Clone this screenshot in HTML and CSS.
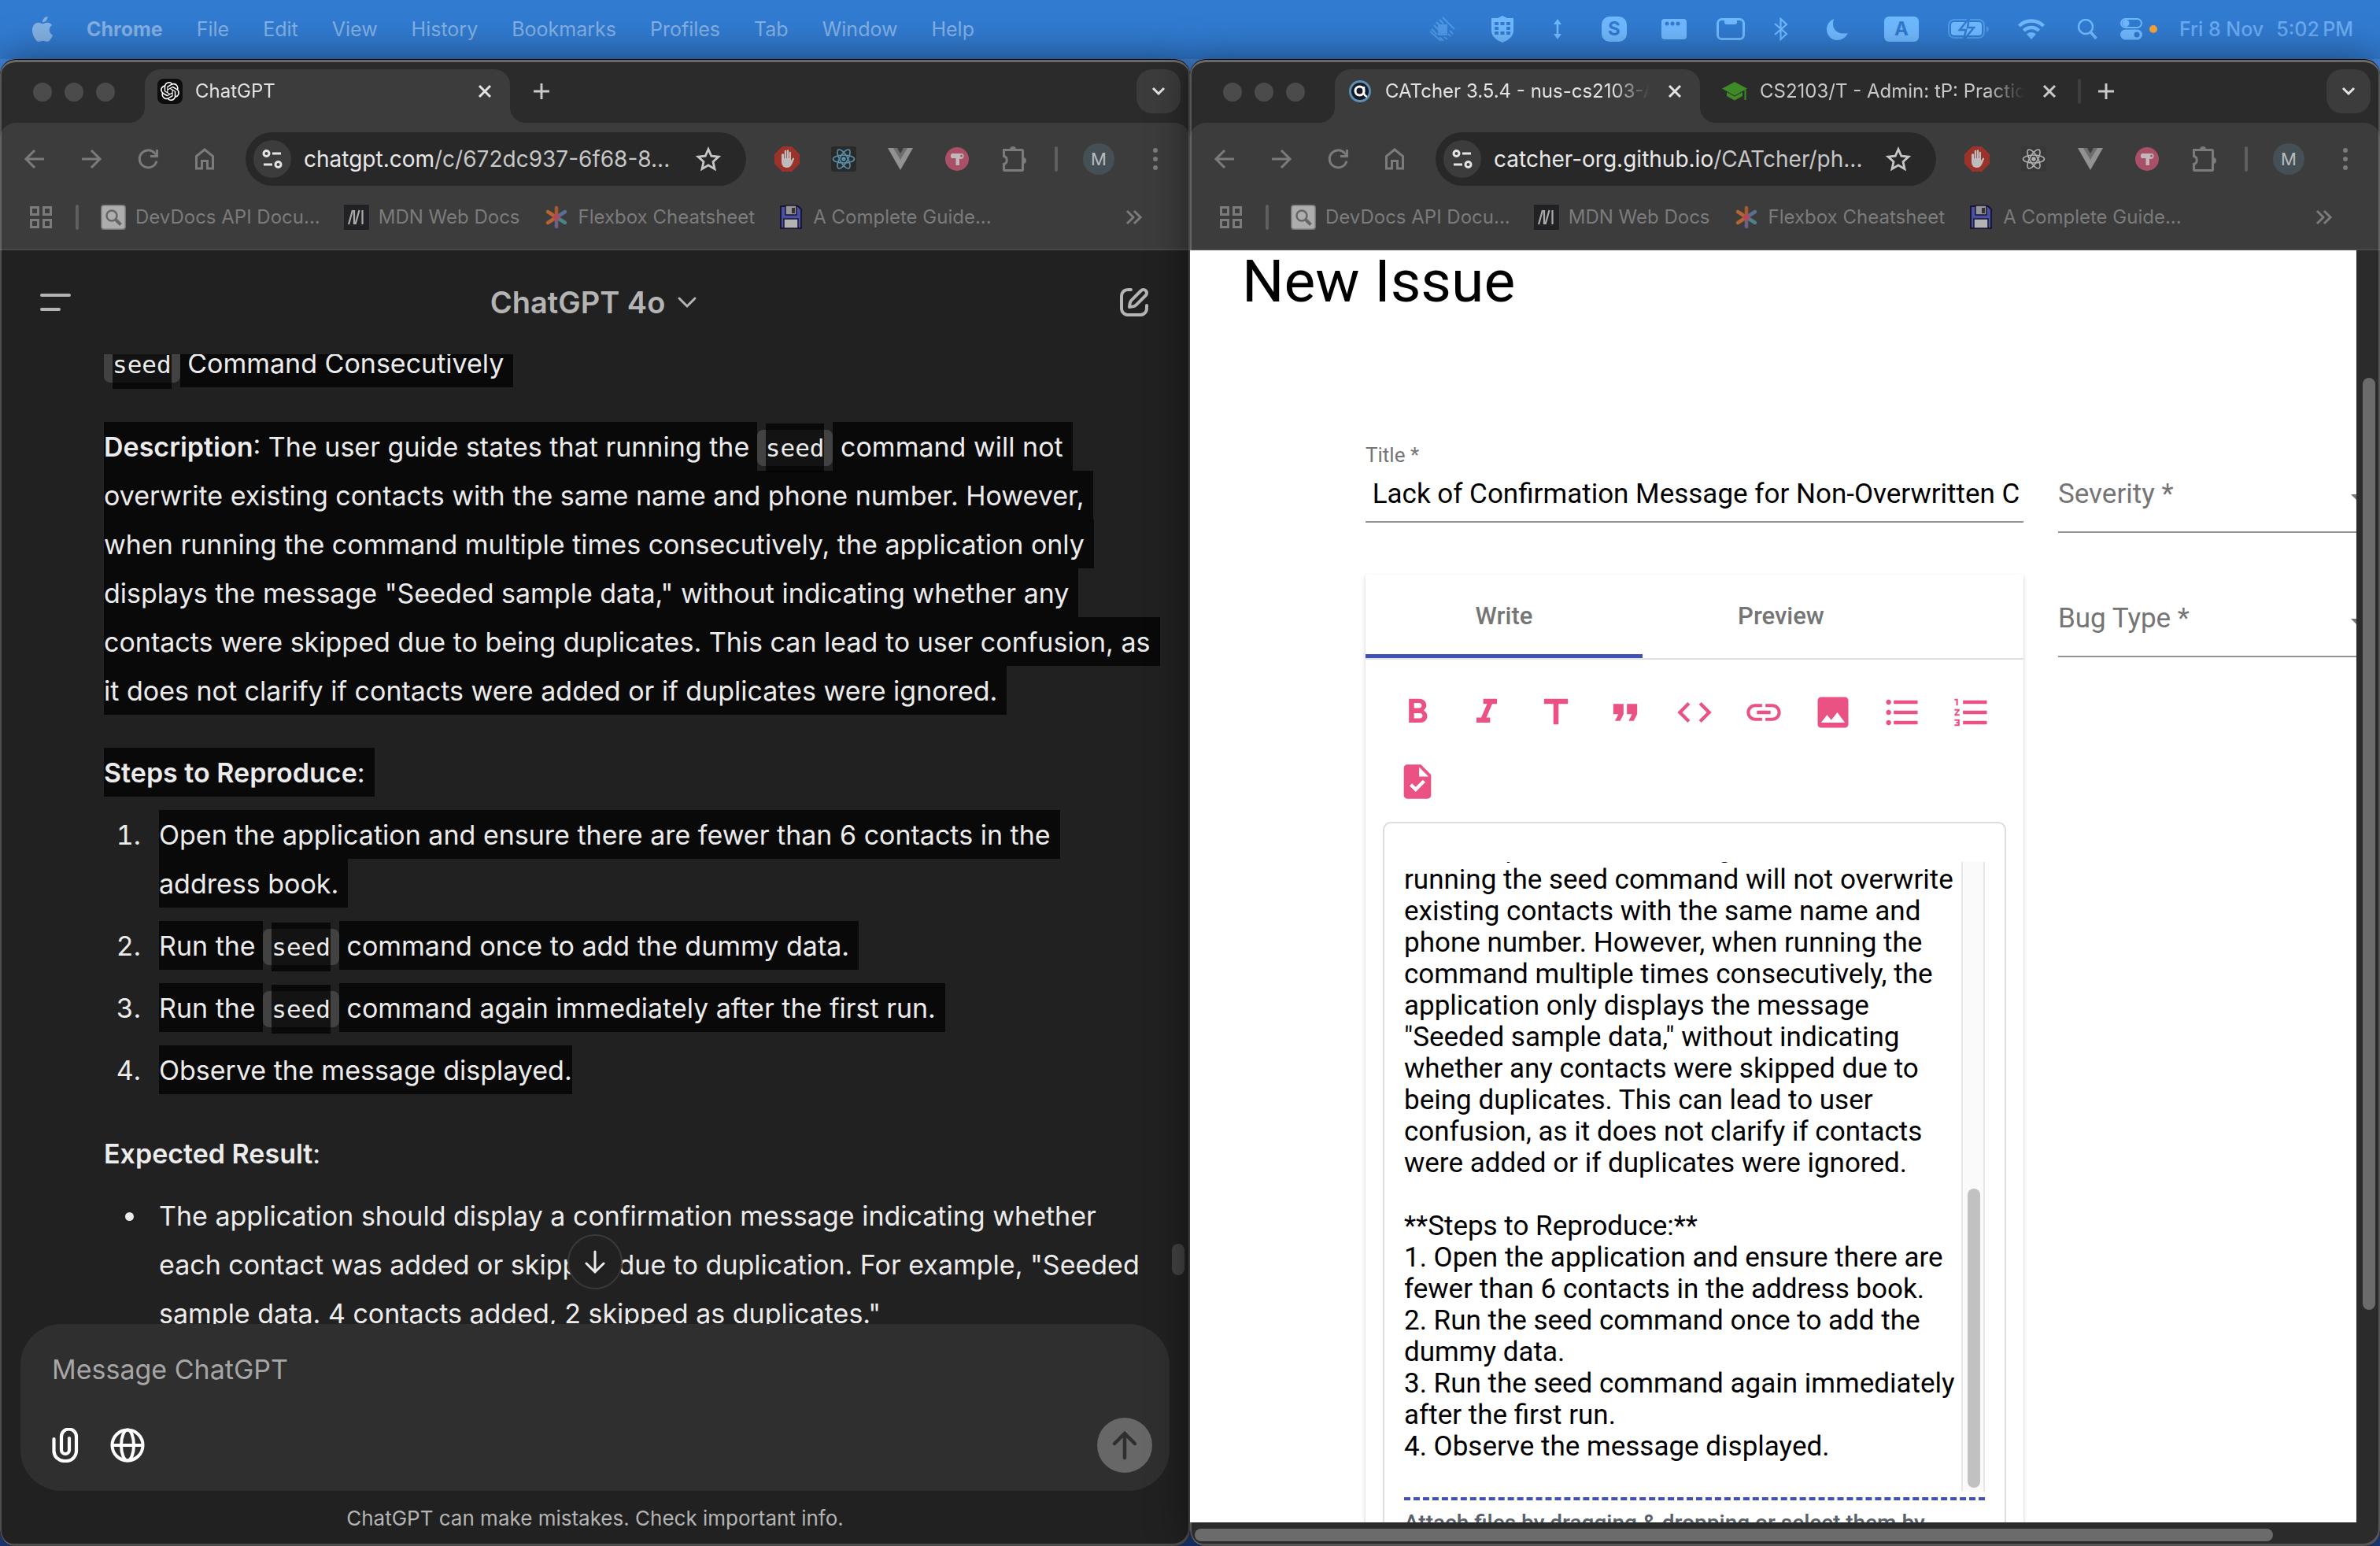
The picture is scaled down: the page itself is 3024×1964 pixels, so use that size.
FILE: index.html
```html
<!DOCTYPE html>
<html lang="en">
<head>
<meta charset="utf-8">
<title>Desktop</title>
<link rel="stylesheet" href="styles.css">
</head>
<body>
<svg class="sprite" aria-hidden="true">
  <symbol id="close" viewBox="0 0 32 32"><path d="M9 9l14 14M23 9L9 23" stroke="currentColor" stroke-width="3" fill="none"/></symbol>
  <symbol id="plus" viewBox="0 0 32 32"><path d="M16 6v20M6 16h20" stroke="currentColor" stroke-width="3" fill="none"/></symbol>
  <symbol id="chevron" viewBox="0 0 32 32"><path d="M9 12l7 7 7-7" stroke="currentColor" stroke-width="3" fill="none"/></symbol>
  <symbol id="back" viewBox="0 0 32 32"><path d="M28 16H5M16 5L5 16l11 11" stroke="currentColor" stroke-width="3" fill="none"/></symbol>
  <symbol id="forward" viewBox="0 0 32 32"><path d="M4 16h23M16 5l11 11-11 11" stroke="currentColor" stroke-width="3" fill="none"/></symbol>
  <symbol id="reload" viewBox="0 0 32 32"><path d="M27 18.500a11 11 0 1 1-3-10.500l3.500 3.500M27.500 4v8.500H19" stroke="currentColor" stroke-width="3" fill="none"/></symbol>
  <symbol id="home" viewBox="0 0 32 32"><path d="M5.500 28V12.500L16 4l10.500 8.500V28h-7v-9.500h-7V28z" stroke="currentColor" stroke-width="3" fill="none"/></symbol>
  <symbol id="tune" viewBox="0 0 32 32"><g stroke="currentColor" stroke-width="3" fill="none"><circle cx="8.500" cy="9" r="3.500"/><path d="M16 9h11M5 23h11"/><circle cx="23.500" cy="23" r="3.500"/></g></symbol>
  <symbol id="star" viewBox="0 0 32 32"><path d="M16 3.500l3.800 8.700 9.200.9-7 6.300 2 9.200-8-4.800-8 4.800 2-9.200-7-6.300 9.200-.9z" stroke="currentColor" stroke-width="2.800" fill="none"/></symbol>
  <symbol id="blocker" viewBox="0 0 32 32"><path d="M10 0h12l10 10v12L22 32H10L0 22V10z" fill="#9c332b"/><path d="M9 10.500v9c0 5 3 7.500 7 7.500 3 0 5-1.500 6.500-5l2.500-6c.5-1.500-1.500-2-2.300-.6L21 18.500V8c0-1.700-2.300-1.700-2.300 0v7h-.6V5.500c0-1.700-2.300-1.700-2.300 0V15h-.7V6c0-1.700-2.300-1.700-2.300 0v9.500h-.7v-5c0-1.700-3.100-1.700-3.100 0z" fill="#bdbdbd"/></symbol>
  <symbol id="react" viewBox="0 0 32 32"><g fill="none" stroke="currentColor" stroke-width="1.600"><ellipse cx="16" cy="16" rx="13.500" ry="5"/><ellipse cx="16" cy="16" rx="13.500" ry="5" transform="rotate(60 16 16)"/><ellipse cx="16" cy="16" rx="13.500" ry="5" transform="rotate(120 16 16)"/></g><circle cx="16" cy="16" r="2.700" fill="currentColor"/></symbol>
  <symbol id="vue" viewBox="0 0 32 32"><path d="M0 2h32L16 30z" fill="#929292"/><path d="M7 2h18l-9 15z" fill="#6e6e6e"/><path d="M12 2h8l-4 7z" fill="#3c3c3c"/></symbol>
  <symbol id="toggl" viewBox="0 0 32 32"><circle cx="16" cy="16" r="15" fill="#a94f66"/><path d="M9 9h14a4 4 0 0 1 0 6.500c-1.500.8-3 .4-4 0V24h-4.500v-9H9c-1.500-2-1.500-4 0-6z" fill="#c0b8ba"/><circle cx="21.500" cy="12" r="1.500" fill="#a94f66"/></symbol>
  <symbol id="puzzle" viewBox="0 0 32 32"><path d="M3.500 4.500h23a1 1 0 0 1 1 1v24a1 1 0 0 1-1 1h-22a1 1 0 0 1-1-1v-7c5-1 5-9 0-10v-7z" stroke="currentColor" stroke-width="3" fill="none"/><path d="M11 4a4 4 0 0 1 8 0zM28 14a4 4 0 0 1 0 8z" fill="currentColor"/></symbol>
  <symbol id="dots" viewBox="0 0 32 32"><g fill="currentColor"><circle cx="16" cy="5" r="3"/><circle cx="16" cy="16" r="3"/><circle cx="16" cy="27" r="3"/></g></symbol>
  <symbol id="apps" viewBox="0 0 32 32"><path d="M3.500 3.500h9v9h-9zM19.500 3.500h9v9h-9zM3.500 19.500h9v9h-9zM19.500 19.500h9v9h-9z" stroke="currentColor" stroke-width="3" fill="none"/></symbol>
  <symbol id="devdocs" viewBox="0 0 32 32"><rect width="32" height="32" rx="4" fill="#777"/><rect x="1.500" y="1.500" width="29" height="29" rx="3" fill="#adadad"/><circle cx="14" cy="14" r="6.500" fill="none" stroke="#666" stroke-width="2.500"/><path d="M19 19l6.500 6.500" stroke="#666" stroke-width="4"/></symbol>
  <symbol id="mdn" viewBox="0 0 32 32"><path d="M0 0h32v32H0z" fill="#222226"/><path d="M6 25l5-18M13 7v18M14.500 25l5-18M23.500 7v18" stroke="#ababab" stroke-width="2.200" fill="none"/></symbol>
  <symbol id="flexbox" viewBox="0 0 32 32"><g stroke-width="4.500" stroke-linecap="round"><path d="M16 4v12" stroke="#a9572f"/><path d="M16 16v12" stroke="#6c5f8a"/><path d="M5 9l11 7" stroke="#b5652f"/><path d="M5 23l11-7" stroke="#b5652f"/><path d="M27 9l-11 7" stroke="#5a6f96"/><path d="M27 23l-11-7" stroke="#4d8388"/></g><circle cx="16" cy="16" r="4" fill="#b0485a"/></symbol>
  <symbol id="floppy" viewBox="0 0 32 32"><path d="M3 2h22l4 4v24H3z" fill="#4c4fa8" stroke="#17172c" stroke-width="2"/><path d="M9 1h14v12H9z" fill="#969696" stroke="#17172c" stroke-width="1.500"/><path d="M17 4h4v7h-4z" fill="#333"/><path d="M7 18h18v12H7z" fill="#b3b3b3" stroke="#17172c" stroke-width="1.500"/></symbol>
  <symbol id="more" viewBox="0 0 32 32"><path d="M8 8l8 8-8 8M17 8l8 8-8 8" stroke="currentColor" stroke-width="3" fill="none"/></symbol>
</svg>

<header class="menubar">
  <nav class="menus" aria-label="Menu bar">
    <svg class="apple" viewBox="0 0 24 24"><path fill="currentColor" d="M12.152 6.896c-.948 0-2.415-1.078-3.960-1.040-2.040.027-3.910 1.183-4.961 3.014-2.117 3.675-.546 9.103 1.519 12.090 1.013 1.454 2.208 3.090 3.792 3.039 1.520-.065 2.090-.987 3.935-.987 1.831 0 2.350.987 3.960.948 1.637-.026 2.676-1.480 3.676-2.948 1.156-1.688 1.636-3.325 1.662-3.415-.039-.013-3.182-1.221-3.220-4.857-.026-3.040 2.480-4.494 2.597-4.559-1.429-2.090-3.623-2.324-4.390-2.376-2-.156-3.675 1.090-4.610 1.090zM15.530 3.830c.843-1.012 1.400-2.427 1.245-3.830-1.207.052-2.662.805-3.532 1.818-.780.896-1.454 2.338-1.273 3.714 1.338.104 2.715-.688 3.559-1.701"/></svg>
    <button class="menu app" type="button">Chrome</button>
    <button class="menu" type="button">File</button>
    <button class="menu" type="button">Edit</button>
    <button class="menu" type="button">View</button>
    <button class="menu" type="button">History</button>
    <button class="menu" type="button">Bookmarks</button>
    <button class="menu" type="button">Profiles</button>
    <button class="menu" type="button">Tab</button>
    <button class="menu" type="button">Window</button>
    <button class="menu" type="button">Help</button>
  </nav>
  <div class="status">
    <span class="slot w64 faint"><svg width="34" height="34" viewBox="0 0 34 34"><path d="M11 11h12v14H11z" fill="currentColor"/><path d="M17 2l15 15M13 5l5 5M26 19l4 4M3 17l7 7M6 12l5 5M9 8l4 4M13 27l5 5M19 27l4 3M24 23l3 3M1 20l14 12" stroke="currentColor" stroke-width="2"/></svg></span>
    <span class="slot w64"><svg width="32" height="36" viewBox="0 0 32 36"><path d="M2 4h8l6-3 6 3h8v16c0 7-6 12-14 15C8 32 2 27 2 20z" fill="currentColor"/><path d="M6 9h5v4H6zM13.500 9h5v4h-5zM21 9h5v4h-5zM6 15h5v4H6zM21 15h5v4h-5zM6 21h5v4H6zM13.500 21h5v4h-5zM21 21h5v4h-5z" fill="#317bd1"/></svg></span>
    <span class="slot w52"><svg width="12" height="26" viewBox="0 0 12 26"><path d="M6 0l5 7H7.300v12H11l-5 7-5-7h3.700V7H1z" fill="currentColor"/></svg></span>
    <span class="slot w68"><b class="badge round">S</b></span>
    <span class="slot w60"><svg width="32" height="26" viewBox="0 0 32 26"><rect width="32" height="26" rx="4" fill="currentColor"/><circle cx="7" cy="6" r="2.500" fill="#317bd1"/><circle cx="14" cy="6" r="2.500" fill="#317bd1"/><circle cx="21" cy="6" r="2.500" fill="#317bd1"/></svg></span>
    <span class="slot w60"><svg width="36" height="28" viewBox="0 0 36 28"><rect x="1.500" y="1.500" width="33" height="25" rx="5" fill="none" stroke="currentColor" stroke-width="3"/><path d="M10 2h16v3q0 3-3 3H13q-3 0-3-3z" fill="currentColor"/></svg></span>
    <span class="slot w44"><svg width="20" height="30" viewBox="0 0 20 30"><path d="M2 8l15 13-7.500 7V2l7.500 7L2 22" fill="none" stroke="currentColor" stroke-width="2.200"/></svg></span>
    <span class="slot w76"><svg width="28" height="28" viewBox="0 0 28 28"><path d="M9 1C5 13 13 22 27 19 24 25 19 28 13 28 6 28 0 22 0 14.500 0 8 4 3 9 1z" fill="currentColor"/></svg></span>
    <span class="slot w62"><b class="badge square">A</b></span>
    <span class="slot w84"><svg width="52" height="26" viewBox="0 0 52 26"><rect x="1" y="1" width="45" height="23" rx="7" fill="none" stroke="currentColor" stroke-width="2" opacity=".5"/><path d="M49 9v8q3-1.500 3-4t-3-4z" fill="currentColor" opacity=".5"/><rect x="4" y="4" width="39" height="17" rx="4" fill="currentColor"/><path d="M27-1L15 14h8l-3 13 13-16h-8z" fill="currentColor" stroke="#317bd1" stroke-width="2.500"/></svg></span>
    <span class="slot w52"><svg width="36" height="28" viewBox="0 0 36 28"><path d="M2.500 10a22 22 0 0 1 31 0M8.500 16a13.500 13.500 0 0 1 19 0" fill="none" stroke="currentColor" stroke-width="4.500"/><path d="M12 20.500a8.500 8.500 0 0 1 12 0L18 27z" fill="currentColor"/></svg></span>
    <span class="slot w66"><svg width="26" height="28" viewBox="0 0 26 28"><circle cx="11" cy="11" r="9" fill="none" stroke="currentColor" stroke-width="2.500"/><path d="M17.500 18l7 8" stroke="currentColor" stroke-width="3.500"/></svg></span>
    <span class="slot w22"><svg width="28" height="28" viewBox="0 0 28 28"><rect x="1" y="1" width="26" height="11" rx="5.500" fill="none" stroke="currentColor" stroke-width="2"/><circle cx="7" cy="6.500" r="4.500" fill="currentColor"/><rect y="14.500" width="28" height="13" rx="6.500" fill="currentColor"/><circle cx="21" cy="21" r="3.500" fill="#317bd1"/></svg></span>
    <span class="mic"></span>
    <time class="clock"><span>Fri 8 Nov</span><span>5:02&#8201;PM</span></time>
  </div>
</header>

<main class="desktop">
  <section class="window" aria-label="ChatGPT window">
    <div class="tabstrip">
      <div class="lights"><i></i><i></i><i></i></div>
      <div class="tab active">
        <svg class="ico32" viewBox="0 0 32 32"><rect width="32" height="32" rx="8" fill="#0d0d0d"/><g transform="translate(4 4)"><path fill="#fff" d="M22.2819 9.8211a5.9847 5.9847 0 0 0-.5157-4.9108 6.0462 6.0462 0 0 0-6.5098-2.9A6.0651 6.0651 0 0 0 4.9807 4.1818a5.9847 5.9847 0 0 0-3.9977 2.9 6.0462 6.0462 0 0 0 .7427 7.0966 5.98 5.98 0 0 0 .511 4.9107 6.051 6.051 0 0 0 6.5146 2.9001A5.9847 5.9847 0 0 0 13.2599 24a6.0557 6.0557 0 0 0 5.7718-4.2058 5.9894 5.9894 0 0 0 3.9977-2.9001 6.0557 6.0557 0 0 0-.7475-7.0729zm-9.022 12.6081a4.4755 4.4755 0 0 1-2.8764-1.0408l.1419-.0804 4.7783-2.7582a.7948.7948 0 0 0 .3927-.6813v-6.7369l2.02 1.1686a.071.071 0 0 1 .038.0615v5.5826a4.504 4.504 0 0 1-4.4945 4.4849zm-9.6607-4.1254a4.4708 4.4708 0 0 1-.5346-3.0137l.142.0852 4.783 2.7582a.7712.7712 0 0 0 .7806 0l5.8428-3.3685v2.3324a.0804.0804 0 0 1-.0332.0615L9.74 19.9502a4.4992 4.4992 0 0 1-6.1408-1.6464zM2.3408 7.8956a4.485 4.485 0 0 1 2.3655-1.9728V11.6a.7664.7664 0 0 0 .3879.6765l5.8144 3.3543-2.0201 1.1685a.0757.0757 0 0 1-.071 0l-4.8303-2.7865A4.504 4.504 0 0 1 2.3408 7.872zm16.5963 3.8558L13.1038 8.364 15.1192 7.2a.0757.0757 0 0 1 .071 0l4.8303 2.7913a4.4944 4.4944 0 0 1-.6765 8.1042v-5.6772a.79.79 0 0 0-.407-.667zm2.0107-3.0231l-.142-.0852-4.7735-2.7818a.7759.7759 0 0 0-.7854 0L9.409 9.2297V6.8974a.0662.0662 0 0 1 .0284-.0615l4.8303-2.7866a4.4992 4.4992 0 0 1 6.6802 4.66zM8.3065 12.863l-2.02-1.1638a.0804.0804 0 0 1-.038-.0567V6.0742a4.4992 4.4992 0 0 1 7.3757-3.4537l-.142.0805L8.704 5.459a.7948.7948 0 0 0-.3927.6813zm1.0976-2.3654l2.602-1.4998 2.6069 1.4998v2.9994l-2.5974 1.4997-2.6067-1.4997Z"/></g></svg>
        <span class="tab-title">ChatGPT</span>
        <button class="icon-btn" type="button" aria-label="Close tab"><svg class="ico32"><use href="#close"/></svg></button>
      </div>
      <button class="icon-btn new-tab" type="button" aria-label="New tab"><svg class="ico32"><use href="#plus"/></svg></button>
      <button class="tab-search" type="button" aria-label="Search tabs"><svg class="ico32"><use href="#chevron"/></svg></button>
    </div>
    <div class="toolbar">
      <button class="tool" type="button" aria-label="Back"><svg class="ico32"><use href="#back"/></svg></button>
      <button class="tool" type="button" aria-label="Forward"><svg class="ico32"><use href="#forward"/></svg></button>
      <button class="tool" type="button" aria-label="Reload"><svg class="ico32"><use href="#reload"/></svg></button>
      <button class="tool" type="button" aria-label="Home"><svg class="ico32"><use href="#home"/></svg></button>
      <div class="omnibox">
        <button class="site" type="button" aria-label="Site information"><svg class="ico32"><use href="#tune"/></svg></button>
        <span class="url"><span class="host">chatgpt.com</span>/c/672dc937-6f68-8...</span>
        <button class="icon-btn star" type="button" aria-label="Bookmark"><svg class="ico32"><use href="#star"/></svg></button>
      </div>
      <button class="tool" type="button" aria-label="Ad blocker"><svg class="ico32"><use href="#blocker"/></svg></button>
      <button class="tool" type="button" aria-label="React tools"><svg class="ico32 react-on"><use href="#react"/></svg></button>
      <button class="tool" type="button" aria-label="Vue tools"><svg class="ico32"><use href="#vue"/></svg></button>
      <button class="tool" type="button" aria-label="Timer"><svg class="ico32"><use href="#toggl"/></svg></button>
      <button class="tool" type="button" aria-label="Extensions"><svg class="ico32"><use href="#puzzle"/></svg></button>
      <span class="divider"></span>
      <button class="tool" type="button" aria-label="Profile"><span class="avatar">M</span></button>
      <button class="tool" type="button" aria-label="Menu"><svg class="ico32"><use href="#dots"/></svg></button>
    </div>
    <nav class="bookmarks" aria-label="Bookmarks">
      <button class="icon-btn" type="button" aria-label="Apps"><svg class="ico32"><use href="#apps"/></svg></button>
      <span class="divider"></span>
      <a class="bookmark" href="#"><svg class="ico32"><use href="#devdocs"/></svg>DevDocs API Docu...</a>
      <a class="bookmark" href="#"><svg class="ico32"><use href="#mdn"/></svg>MDN Web Docs</a>
      <a class="bookmark" href="#"><svg class="ico32"><use href="#flexbox"/></svg>Flexbox Cheatsheet</a>
      <a class="bookmark" href="#"><svg class="ico32"><use href="#floppy"/></svg>A Complete Guide...</a>
      <button class="icon-btn overflow" type="button" aria-label="More bookmarks"><svg class="ico32"><use href="#more"/></svg></button>
    </nav>

    <div class="chat">
      <div class="chat-head">
        <button class="icon-btn" type="button" aria-label="Open sidebar"><svg class="ico48" viewBox="0 0 48 48"><path d="M6 15h35M6 33h22" stroke="currentColor" stroke-width="4" stroke-linecap="round"/></svg></button>
        <button class="model" type="button">ChatGPT 4o<svg class="ico32" viewBox="0 0 32 32"><path d="M6 11l10 10 10-10" stroke="currentColor" stroke-width="3" fill="none" stroke-linecap="round"/></svg></button>
        <button class="icon-btn" type="button" aria-label="New chat"><svg class="ico48" viewBox="0 0 24 24"><path fill="currentColor" d="M15.673 3.913a3.121 3.121 0 1 1 4.414 4.414l-5.937 5.937a5 5 0 0 1-2.828 1.415l-2.180.311a1 1 0 0 1-1.132-1.131l.311-2.180A5 5 0 0 1 9.736 9.850zm3 1.414a1.121 1.121 0 0 0-1.586 0l-5.937 5.937a3 3 0 0 0-.849 1.697l-.123.860.860-.122a3 3 0 0 0 1.698-.849l5.937-5.937a1.121 1.121 0 0 0 0-1.586M11 4a1 1 0 0 1-1 1c-.998 0-1.702.008-2.253.060-.540.052-.862.141-1.109.267a3 3 0 0 0-1.311 1.311c-.134.263-.226.611-.276 1.216C5.001 8.471 5 9.264 5 10.400v3.200c0 1.137 0 1.929.051 2.546.050.605.142.953.276 1.216a3 3 0 0 0 1.311 1.311c.263.134.611.226 1.216.276.617.050 1.410.051 2.546.051h3.200c1.137 0 1.929 0 2.546-.051.605-.050.953-.142 1.216-.276a3 3 0 0 0 1.311-1.311c.126-.247.215-.569.266-1.108.053-.552.060-1.256.060-2.255a1 1 0 1 1 2 .002c0 .978-.006 1.780-.069 2.442-.064.673-.192 1.270-.475 1.827a5 5 0 0 1-2.185 2.185c-.592.302-1.232.428-1.961.487C15.600 21 14.727 21 13.643 21h-3.286c-1.084 0-1.958 0-2.666-.058-.728-.060-1.369-.185-1.961-.487a5 5 0 0 1-2.185-2.185c-.302-.592-.428-1.233-.487-1.961C3 15.600 3 14.727 3 13.643v-3.286c0-1.084 0-1.958.058-2.666.060-.729.185-1.369.487-1.961A5 5 0 0 1 5.730 3.545c.556-.284 1.154-.411 1.827-.475C8.220 3.007 9.021 3 10 3a1 1 0 0 1 1 1"/></svg></button>
      </div>
      <div class="thread">
        <p class="lead"><code><span class="sel">seed</span></code><span class="sel tail"> Command Consecutively</span></p>
        <p><span class="sel"><strong>Description</strong>: The user guide states that running the </span><code><span class="sel">seed</span></code><span class="sel tail"> command will not<br>overwrite existing contacts with the same name and phone number. However,<br>when running the command multiple times consecutively, the application only<br>displays the message "Seeded sample data," without indicating whether any<br>contacts were skipped due to being duplicates. This can lead to user confusion, as<br>it does not clarify if contacts were added or if duplicates were ignored.</span></p>
        <p class="heading"><span class="sel tail"><strong>Steps to Reproduce</strong>:</span></p>
        <ol>
          <li><span class="sel tail">Open the application and ensure there are fewer than 6 contacts in the<br>address book.</span></li>
          <li><span class="sel">Run the </span><code><span class="sel">seed</span></code><span class="sel tail"> command once to add the dummy data.</span></li>
          <li><span class="sel">Run the </span><code><span class="sel">seed</span></code><span class="sel tail"> command again immediately after the first run.</span></li>
          <li><span class="sel">Observe the message displayed.</span></li>
        </ol>
        <p class="heading"><strong>Expected Result</strong>:</p>
        <ul>
          <li>The application should display a confirmation message indicating whether<br>each contact was added or skipped due to duplication. For example, "Seeded<br>sample data. 4 contacts added, 2 skipped as duplicates."</li>
        </ul>
        <button class="jump" type="button" aria-label="Scroll to bottom"><svg class="ico32" viewBox="0 0 32 32"><path d="M16 3v26M5 18l11 11 11-11" stroke="currentColor" stroke-width="3" fill="none" stroke-linecap="round"/></svg></button>
        <span class="thread-thumb"></span>
      </div>
      <form class="composer">
        <textarea class="prompt" rows="1" placeholder="Message ChatGPT" aria-label="Message ChatGPT"></textarea>
        <div class="actions">
          <button class="icon-btn" type="button" aria-label="Attach files"><svg class="ico44" viewBox="0 0 44 44"><path d="M7.500 15v16a13 13 0 0 0 13 12h2.500a13 13 0 0 0 13-13V12a9.500 9.500 0 0 0-19 0v17a5 5 0 0 0 10 0V14" transform="translate(1 -1)" stroke="currentColor" stroke-width="4.200" fill="none" stroke-linecap="round"/></svg></button>
          <button class="icon-btn" type="button" aria-label="Search the web"><svg class="ico44" viewBox="0 0 44 44"><g stroke="currentColor" stroke-width="4" fill="none"><circle cx="22" cy="22" r="19.500"/><ellipse cx="22" cy="22" rx="8" ry="19.500"/><path d="M3 22h38"/></g></svg></button>
          <button class="send" type="button" aria-label="Send"><svg class="ico44" viewBox="0 0 44 44"><path d="M22 38V8M9 20L22 7l13 13" stroke="currentColor" stroke-width="4.500" fill="none" stroke-linecap="round"/></svg></button>
        </div>
      </form>
      <p class="disclaimer">ChatGPT can make mistakes. Check important info.</p>
    </div>
  </section>

  <section class="window" aria-label="CATcher window">
    <div class="tabstrip">
      <div class="lights"><i></i><i></i><i></i></div>
      <div class="tab active">
        <svg class="ico32" viewBox="0 0 32 32"><circle cx="16" cy="16" r="14" fill="#5b8fb5"/><circle cx="16" cy="16" r="11" fill="#141b24"/><circle cx="15.500" cy="15.500" r="5.500" fill="none" stroke="#fff" stroke-width="3"/><path d="M21 10v9q1 3 4 4" stroke="#fff" stroke-width="2.500" fill="none"/></svg>
        <span class="tab-title">CATcher 3.5.4 - nus-cs2103-AY2425</span>
        <button class="icon-btn" type="button" aria-label="Close tab"><svg class="ico32"><use href="#close"/></svg></button>
      </div>
      <div class="tab">
        <svg class="ico32" viewBox="0 0 32 32"><path d="M16 4l16 8.500-16 9-16-9z" fill="#3e8a26"/><path d="M6 17l10 5.500L26 17v5l-10 5.500L6 22z" fill="#3e8a26"/><path d="M29.500 14v13" stroke="#3e8a26" stroke-width="2"/></svg>
        <span class="tab-title">CS2103/T - Admin: tP: Practical Exam</span>
        <button class="icon-btn" type="button" aria-label="Close tab"><svg class="ico32"><use href="#close"/></svg></button>
      </div>
      <span class="tab-sep"></span>
      <button class="icon-btn new-tab near" type="button" aria-label="New tab"><svg class="ico32"><use href="#plus"/></svg></button>
      <button class="tab-search" type="button" aria-label="Search tabs"><svg class="ico32"><use href="#chevron"/></svg></button>
    </div>
    <div class="toolbar">
      <button class="tool" type="button" aria-label="Back"><svg class="ico32"><use href="#back"/></svg></button>
      <button class="tool" type="button" aria-label="Forward"><svg class="ico32"><use href="#forward"/></svg></button>
      <button class="tool" type="button" aria-label="Reload"><svg class="ico32"><use href="#reload"/></svg></button>
      <button class="tool" type="button" aria-label="Home"><svg class="ico32"><use href="#home"/></svg></button>
      <div class="omnibox">
        <button class="site" type="button" aria-label="Site information"><svg class="ico32"><use href="#tune"/></svg></button>
        <span class="url"><span class="host">catcher-org.github.io</span>/CATcher/ph...</span>
        <button class="icon-btn star" type="button" aria-label="Bookmark"><svg class="ico32"><use href="#star"/></svg></button>
      </div>
      <button class="tool" type="button" aria-label="Ad blocker"><svg class="ico32"><use href="#blocker"/></svg></button>
      <button class="tool" type="button" aria-label="React tools"><svg class="ico32 react-off"><use href="#react"/></svg></button>
      <button class="tool" type="button" aria-label="Vue tools"><svg class="ico32"><use href="#vue"/></svg></button>
      <button class="tool" type="button" aria-label="Timer"><svg class="ico32"><use href="#toggl"/></svg></button>
      <button class="tool" type="button" aria-label="Extensions"><svg class="ico32"><use href="#puzzle"/></svg></button>
      <span class="divider"></span>
      <button class="tool" type="button" aria-label="Profile"><span class="avatar">M</span></button>
      <button class="tool" type="button" aria-label="Menu"><svg class="ico32"><use href="#dots"/></svg></button>
    </div>
    <nav class="bookmarks" aria-label="Bookmarks">
      <button class="icon-btn" type="button" aria-label="Apps"><svg class="ico32"><use href="#apps"/></svg></button>
      <span class="divider"></span>
      <a class="bookmark" href="#"><svg class="ico32"><use href="#devdocs"/></svg>DevDocs API Docu...</a>
      <a class="bookmark" href="#"><svg class="ico32"><use href="#mdn"/></svg>MDN Web Docs</a>
      <a class="bookmark" href="#"><svg class="ico32"><use href="#flexbox"/></svg>Flexbox Cheatsheet</a>
      <a class="bookmark" href="#"><svg class="ico32"><use href="#floppy"/></svg>A Complete Guide...</a>
      <button class="icon-btn overflow" type="button" aria-label="More bookmarks"><svg class="ico32"><use href="#more"/></svg></button>
    </nav>

    <div class="viewport">
      <div class="issue">
        <h1>New Issue</h1>
        <form class="issue-form">
          <div class="main-col">
            <label class="field-label" for="title">Title *</label>
            <input class="title-input" id="title" type="text" value=" Lack of Confirmation Message for Non-Overwritten C">
            <div class="card">
              <div class="card-tabs">
                <button class="card-tab current" type="button">Write</button>
                <button class="card-tab" type="button">Preview</button>
              </div>
              <div class="md-tools">
                <button type="button" aria-label="Bold"><svg viewBox="0 0 24 24"><path d="M15.600 10.790c.970-.670 1.650-1.770 1.650-2.790 0-2.260-1.750-4-4-4H7v14h7.040c2.090 0 3.710-1.700 3.710-3.790 0-1.520-.860-2.820-2.150-3.420zM10 6.500h3c.830 0 1.500.670 1.500 1.500s-.670 1.500-1.500 1.500h-3v-3zm3.500 9H10v-3h3.500c.830 0 1.500.670 1.500 1.500s-.670 1.500-1.500 1.500z"/></svg></button>
                <button type="button" aria-label="Italic"><svg viewBox="0 0 24 24"><path d="M10 4v3h2.210l-3.420 8H6v3h8v-3h-2.210l3.420-8H18V4z"/></svg></button>
                <button type="button" aria-label="Heading"><svg viewBox="0 0 24 24"><path d="M5 4v3h5.500v12h3V7H19V4z"/></svg></button>
                <button type="button" aria-label="Quote"><svg viewBox="0 0 24 24"><path d="M6 17h3l2-4V7H5v6h3zm8 0h3l2-4V7h-6v6h3z"/></svg></button>
                <button type="button" aria-label="Code"><svg viewBox="0 0 24 24"><path d="M9.400 16.600L4.800 12l4.600-4.600L8 6l-6 6 6 6 1.400-1.400zm5.200 0l4.600-4.600-4.600-4.600L16 6l6 6-6 6-1.400-1.400z"/></svg></button>
                <button type="button" aria-label="Link"><svg viewBox="0 0 24 24"><path d="M3.900 12c0-1.710 1.390-3.100 3.100-3.100h4V7H7c-2.760 0-5 2.240-5 5s2.240 5 5 5h4v-1.900H7c-1.710 0-3.100-1.390-3.100-3.100zM8 13h8v-2H8v2zm9-6h-4v1.900h4c1.710 0 3.100 1.390 3.100 3.100s-1.390 3.100-3.100 3.100h-4V17h4c2.760 0 5-2.240 5-5s-2.240-5-5-5z"/></svg></button>
                <button type="button" aria-label="Image"><svg viewBox="0 0 24 24"><path d="M21 19V5c0-1.100-.9-2-2-2H5c-1.100 0-2 .9-2 2v14c0 1.100.9 2 2 2h14c1.100 0 2-.9 2-2zM8.500 13.500l2.500 3.010L14.500 12l4.500 6H5l3.500-4.500z"/></svg></button>
                <button type="button" aria-label="Bulleted list"><svg viewBox="0 0 24 24"><path d="M4 10.500c-.830 0-1.500.670-1.500 1.500s.670 1.500 1.500 1.500 1.500-.670 1.500-1.500-.670-1.500-1.500-1.500zm0-6c-.830 0-1.500.670-1.500 1.500S3.170 7.500 4 7.500 5.500 6.830 5.500 6 4.830 4.500 4 4.500zm0 12c-.830 0-1.500.680-1.500 1.500s.680 1.500 1.500 1.500 1.500-.680 1.500-1.500-.670-1.500-1.500-1.500zM7 19h14v-2H7v2zm0-6h14v-2H7v2zm0-8v2h14V5H7z"/></svg></button>
                <button type="button" aria-label="Numbered list"><svg viewBox="0 0 24 24"><path d="M2 17h2v.5H3v1h1v.5H2v1h3v-4H2v1zm1-9h1V4H2v1h1v3zm-1 3h1.800L2 13.100v.9h3v-1H3.200L5 10.900V10H2v1zm5-6v2h14V5H7zm0 14h14v-2H7v2zm0-6h14v-2H7v2z"/></svg></button>
                <button type="button" aria-label="Task"><svg viewBox="0 0 24 24"><path d="M14 2H6c-1.100 0-1.990.9-1.990 2L4 20c0 1.100.890 2 1.990 2H18c1.100 0 2-.9 2-2V8l-6-6zm-3.060 16L7.400 14.460l1.410-1.410 2.120 2.120 4.240-4.240 1.410 1.410L10.940 18zM13 9V3.500L18.500 9H13z"/></svg></button>
              </div>
              <div class="editor">
                <div class="editor-scroll">
                  <textarea class="body-input" aria-label="Description">**Description:** The user guide states that
running the seed command will not overwrite existing contacts with the same name and phone number. However, when running the command multiple times consecutively, the application only displays the message "Seeded sample data," without indicating whether any contacts were skipped due to being duplicates. This can lead to user confusion, as it does not clarify if contacts were added or if duplicates were ignored.

**Steps to Reproduce:**
1. Open the application and ensure there are fewer than 6 contacts in the address book.
2. Run the seed command once to add the dummy data.
3. Run the seed command again immediately after the first run.
4. Observe the message displayed.
</textarea>
                  <span class="editor-track"><span class="editor-thumb"></span></span>
                </div>
                <p class="attach">Attach files by dragging &amp; dropping or select them by</p>
              </div>
            </div>
          </div>
          <div class="side-col">
            <span class="select-wrap"><select aria-label="Severity"><option>Severity *</option></select><svg width="22" height="11" viewBox="0 0 22 11"><path d="M0 0h22L11 11z" fill="#757575"/></svg></span>
            <span class="select-wrap"><select aria-label="Bug Type"><option>Bug Type *</option></select><svg width="22" height="11" viewBox="0 0 22 11"><path d="M0 0h22L11 11z" fill="#757575"/></svg></span>
          </div>
        </form>
      </div>
      <div class="vscroll"><span></span></div>
      <div class="hscroll"><span></span></div>
    </div>
  </section>
</main>
</body>
</html>
```
FILE: styles.css
```css
* { box-sizing: border-box; }

html, body { height: 100%; }

body {
  margin: 0;
  display: flex;
  flex-direction: column;
  overflow: hidden;
  font-family: Inter, "Liberation Sans", sans-serif;
  background: linear-gradient(#468ee8 0, #2b62b8 60%, #1c3c80 100%);
}

p, h1, ol, ul { margin: 0; padding: 0; }

button {
  margin: 0;
  padding: 0;
  border: 0;
  background: none;
  color: inherit;
  font: inherit;
}

svg { display: block; flex: none; }
.sprite { position: absolute; width: 0; height: 0; }
.ico32 { width: 32px; height: 32px; }
.ico44 { width: 44px; height: 44px; }
.ico48 { width: 48px; height: 48px; }
.icon-btn { display: block; flex: none; }

/* Menu bar */
.menubar {
  flex: none;
  display: flex;
  justify-content: space-between;
  align-items: center;
  height: 75px;
  padding: 0 34px 2px 38px;
  background: #317bd1;
  color: #83b1e4;
  font-size: 25px;
  white-space: nowrap;
}
.menus { display: flex; align-items: center; gap: 43px; }
.apple { width: 32px; height: 32px; margin-right: -3px; }
.app { font-weight: 700; }
.status { display: flex; align-items: center; gap: 12px; color: #70b9ff; }
.slot { display: flex; justify-content: center; flex: none; }
.slot svg { overflow: visible; }
.faint { opacity: .5; }
.w22 { width: 22px; }
.w44 { width: 44px; }
.w52 { width: 52px; }
.w60 { width: 60px; }
.w62 { width: 62px; }
.w64 { width: 64px; }
.w66 { width: 66px; }
.w68 { width: 68px; }
.w76 { width: 76px; }
.w84 { width: 84px; }
.badge {
  height: 32px;
  line-height: 32px;
  text-align: center;
  background: #70b9ff;
  color: #317bd1;
  font-size: 24px;
}
.round { width: 32px; border-radius: 10px; }
.square { width: 44px; border-radius: 6px; }
.mic { width: 10px; height: 10px; border-radius: 50%; background: #f2a33c; }
.clock { display: flex; gap: 16px; margin-left: 16px; color: #6bacf2; font-weight: 500; }

/* Browser windows */
.desktop { flex: 1; min-height: 0; display: grid; grid-template-columns: 1fr 1fr; }
.window {
  position: relative;
  min-width: 0;
  min-height: 0;
  display: flex;
  flex-direction: column;
  overflow: hidden;
  border-radius: 20px;
  background: #2b2b2b;
  box-shadow: 0 0 50px rgba(0, 0, 0, .5);
}
.window::after {
  content: "";
  position: absolute;
  inset: 0;
  border-radius: 20px;
  box-shadow: inset 0 1px #000, inset 0 4px #6a6a6a, inset 2px 0 rgba(255, 255, 255, .2), inset -2px -3px rgba(255, 255, 255, .2);
  pointer-events: none;
}

.tabstrip { flex: none; display: flex; align-items: center; height: 81px; padding: 13px 12px 0 42px; }
.lights { display: flex; gap: 16px; margin-right: 38px; padding-bottom: 10px; }
.lights i { width: 24px; height: 24px; border-radius: 50%; background: #4b4b4b; }
.tab {
  position: relative;
  flex: 0 1 464px;
  min-width: 0;
  display: flex;
  align-items: center;
  height: 68px;
  padding: 0 16px 12px;
  gap: 16px;
  color: #c9c9c9;
}
.tab.active { border-radius: 20px 20px 0 0; background: #3c3c3c; color: #e3e3e3; }
.tab.active::before, .tab.active::after {
  content: "";
  position: absolute;
  bottom: 0;
  width: 20px;
  height: 20px;
}
.tab.active::before { right: 100%; background: radial-gradient(circle at 0 0, #2b2b2b 20px, #3c3c3c 20px); }
.tab.active::after { left: 100%; background: radial-gradient(circle at 100% 0, #2b2b2b 20px, #3c3c3c 20px); }
.tab + .tab { margin-left: 12px; }
.tab-title {
  flex: 1;
  overflow: hidden;
  white-space: nowrap;
  font-size: 24px;
  line-height: 32px;
  -webkit-mask-image: linear-gradient(to left, transparent, #000 48px);
  mask-image: linear-gradient(to left, transparent, #000 48px);
}
.tab-sep { width: 4px; height: 32px; margin: 0 0 12px 4px; border-radius: 2px; background: #3f3f3f; }
.new-tab { margin: 0 0 12px 24px; color: #c9c9c9; }
.new-tab.near { margin-left: 16px; }
.tab-search {
  display: grid;
  place-items: center;
  width: 56px;
  height: 56px;
  margin: 0 0 12px auto;
  border-radius: 20px;
  background: #3c3c3c;
  color: #e3e3e3;
}

.toolbar { flex: none; display: flex; align-items: center; height: 92px; padding: 0 8px; background: #3c3c3c; color: #7b7b7b; border-radius: 20px 20px 0 0; }
.tool { flex: none; width: 72px; height: 48px; display: grid; place-items: center; }
.omnibox {
  flex: 1;
  min-width: 0;
  display: flex;
  align-items: center;
  height: 68px;
  margin: 0 16px;
  padding: 0 32px 0 10px;
  border-radius: 34px;
  background: #282828;
}
.site { flex: none; display: grid; place-items: center; width: 48px; height: 48px; border-radius: 50%; background: #3c3c3c; color: #e3e3e3; }
.url { flex: 1; overflow: hidden; margin-left: 16px; white-space: nowrap; color: #c7c7c7; font-size: 28px; line-height: 40px; }
.host { color: #e8e8e8; }
.star { color: #c7c7c7; }
.react-on { background: #2a2a2a; border-radius: 3px; color: #5791ab; }
.react-off { background: #383838; border-radius: 3px; color: #b0b0b0; }
.divider { flex: none; width: 4px; height: 32px; margin: 0 16px; border-radius: 2px; background: #5f5f5f; }
.avatar { display: grid; place-items: center; width: 40px; height: 40px; border-radius: 50%; background: #455056; color: #b8bcbe; font-size: 22px; }

.bookmarks {
  flex: none;
  display: flex;
  align-items: center;
  height: 70px;
  padding: 0 56px 12px 36px;
  border-bottom: 2px solid #484848;
  background: #3c3c3c;
  color: #7b7b7b;
  font-size: 24px;
  line-height: 32px;
  white-space: nowrap;
}
.bookmarks .divider { margin: 0 28px; }
.bookmark { display: flex; align-items: center; gap: 12px; margin-right: 30px; color: inherit; text-decoration: none; }
.overflow { margin-left: auto; }

/* ChatGPT page */
.chat { flex: 1; min-height: 0; display: flex; flex-direction: column; background: #212121; color: #ececec; }
.chat-head { flex: none; display: flex; align-items: center; justify-content: space-between; height: 132px; padding: 0 47px; color: #b4b4b4; }
.model { display: flex; align-items: center; gap: 12px; font-size: 38px; font-weight: 600; }
.thread {
  position: relative;
  flex: 1;
  min-height: 0;
  overflow: hidden;
  padding: 0 48px 0 132px;
  font-size: 34px;
  line-height: 62px;
  white-space: nowrap;
}
.thread p { margin-bottom: 42px; }
.thread ol, .thread .lead { margin-bottom: 44px; }
.thread .lead { margin-top: -19px; }
.thread .heading { margin-bottom: 17px; }
.thread strong { font-weight: 600; }
.thread ol, .thread ul { padding-left: 56px; }
.thread li { padding-left: 14px; }
.thread li + li { margin-top: 17px; }
.sel {
  padding: 11px 0 10px;
  background: rgba(0, 0, 0, .7);
  -webkit-box-decoration-break: clone;
  box-decoration-break: clone;
}
.tail { padding-right: 12px; }
.thread code {
  padding: 5px 11px;
  border-radius: 8px;
  background: #424242;
  font-family: "DejaVu Sans Mono", monospace;
  font-size: 31px;
  line-height: 46px;
}
.thread code .sel { padding: 13px 0; }
.jump {
  position: absolute;
  left: 50%;
  bottom: 44px;
  display: grid;
  place-items: center;
  width: 70px;
  height: 70px;
  margin-left: -35px;
  border: 2px solid #393939;
  border-radius: 50%;
  background: #212121;
}
.thread-thumb { position: absolute; right: 7px; bottom: 62px; width: 16px; height: 40px; border-radius: 8px; background: #424242; }
.composer { flex: none; margin: 0 26px; padding: 27px 22px 23px 34px; border-radius: 52px; background: #2f2f2f; }
.prompt {
  display: block;
  width: 100%;
  height: 62px;
  margin: 0 0 30px;
  padding: 0 6px;
  border: 0;
  outline: 0;
  resize: none;
  background: none;
  color: #ececec;
  font-family: inherit;
  font-size: 34px;
  line-height: 62px;
}
.prompt::placeholder { color: #a6a6a6; }
.actions { display: flex; align-items: center; gap: 36px; color: #fff; }
.send { display: grid; place-items: center; width: 70px; height: 70px; margin-left: auto; border-radius: 50%; background: #676767; color: #2f2f2f; }
.disclaimer { flex: none; color: #b4b4b4; font-size: 26px; line-height: 70px; text-align: center; }

/* CATcher page */
.viewport {
  flex: 1;
  min-height: 0;
  display: grid;
  grid-template: minmax(0, 1fr) 30px / minmax(0, 1fr) 30px;
  background: #2b2b2b;
  font-family: Roboto, "Liberation Sans", sans-serif;
}
.issue { overflow: hidden; background: #fff; color: #000; }
.issue h1 { padding-left: 66px; font-size: 75px; font-weight: 400; line-height: 78px; }
.issue-form { display: grid; grid-template-columns: minmax(0, 1fr) 396px; gap: 44px; margin: 166px -17px 0 223px; }
.field-label { display: block; color: #757575; font-size: 26px; line-height: 32px; }
.title-input {
  display: block;
  width: 100%;
  height: 60px;
  margin: 10px 0 66px;
  padding: 0 0 11px;
  border: 0;
  border-bottom: 2px solid #949494;
  outline: 0;
  background: none;
  color: #000;
  font-family: inherit;
  font-size: 35px;
}
.card { border-radius: 2px; box-shadow: 0 2px 5px rgba(0, 0, 0, .2); }
.card-tabs { display: flex; height: 108px; border-bottom: 2px solid #e0e0e0; }
.card-tab { width: 352px; padding-top: 3px; border-bottom: 5px solid transparent; color: #757575; font-size: 31px; font-weight: 500; }
.card-tab.current { border-color: #3f51b5; }
.md-tools { display: flex; flex-wrap: wrap; padding: 23px 22px 7px; }
.md-tools button { display: grid; place-items: center; width: 88px; height: 88px; }
.md-tools svg { width: 52px; height: 52px; fill: #ea5284; }
.editor { margin: 0 22px; padding: 49px 25px 0; border: 2px solid #ddd; border-radius: 10px; }
.editor-scroll { display: flex; height: 800px; overflow: hidden; }
.body-input {
  flex: 1;
  min-width: 0;
  height: 840px;
  margin: -37px 0 0;
  padding: 0;
  border: 0;
  outline: 0;
  resize: none;
  overflow: hidden;
  background: none;
  color: #000;
  font-family: inherit;
  font-size: 35px;
  line-height: 40px;
}
.editor-track { width: 30px; padding: 415px 6px 0; border: solid #e8e8e8; border-width: 0 2px; background: #fafafa; }
.editor-thumb { display: block; width: 16px; height: 380px; border-radius: 8px; background: #c1c1c1; }
.attach { margin-top: 7px; padding-top: 9px; border-top: 4px dashed #3f51b5; color: #586069; font-size: 28px; font-weight: 500; line-height: 40px; white-space: nowrap; }
.side-col { padding-top: 42px; }
.select-wrap { display: flex; align-items: center; height: 73px; margin-bottom: 85px; padding: 0 2px 25px 0; border-bottom: 2px solid #949494; }
.select-wrap svg { margin-top: 12px; }
.select-wrap select {
  flex: 1;
  height: 46px;
  padding: 0;
  border: 0;
  outline: 0;
  appearance: none;
  background: none;
  color: #757575;
  font-family: inherit;
  font-size: 35px;
}
.vscroll { padding: 162px 6px 0 8px; }
.vscroll span { display: block; width: 16px; height: 1184px; border-radius: 8px; background: #6b6b6b; }
.hscroll { padding: 8px 106px 6px 6px; }
.hscroll span { display: block; height: 16px; border-radius: 8px; background: #6b6b6b; }
```
